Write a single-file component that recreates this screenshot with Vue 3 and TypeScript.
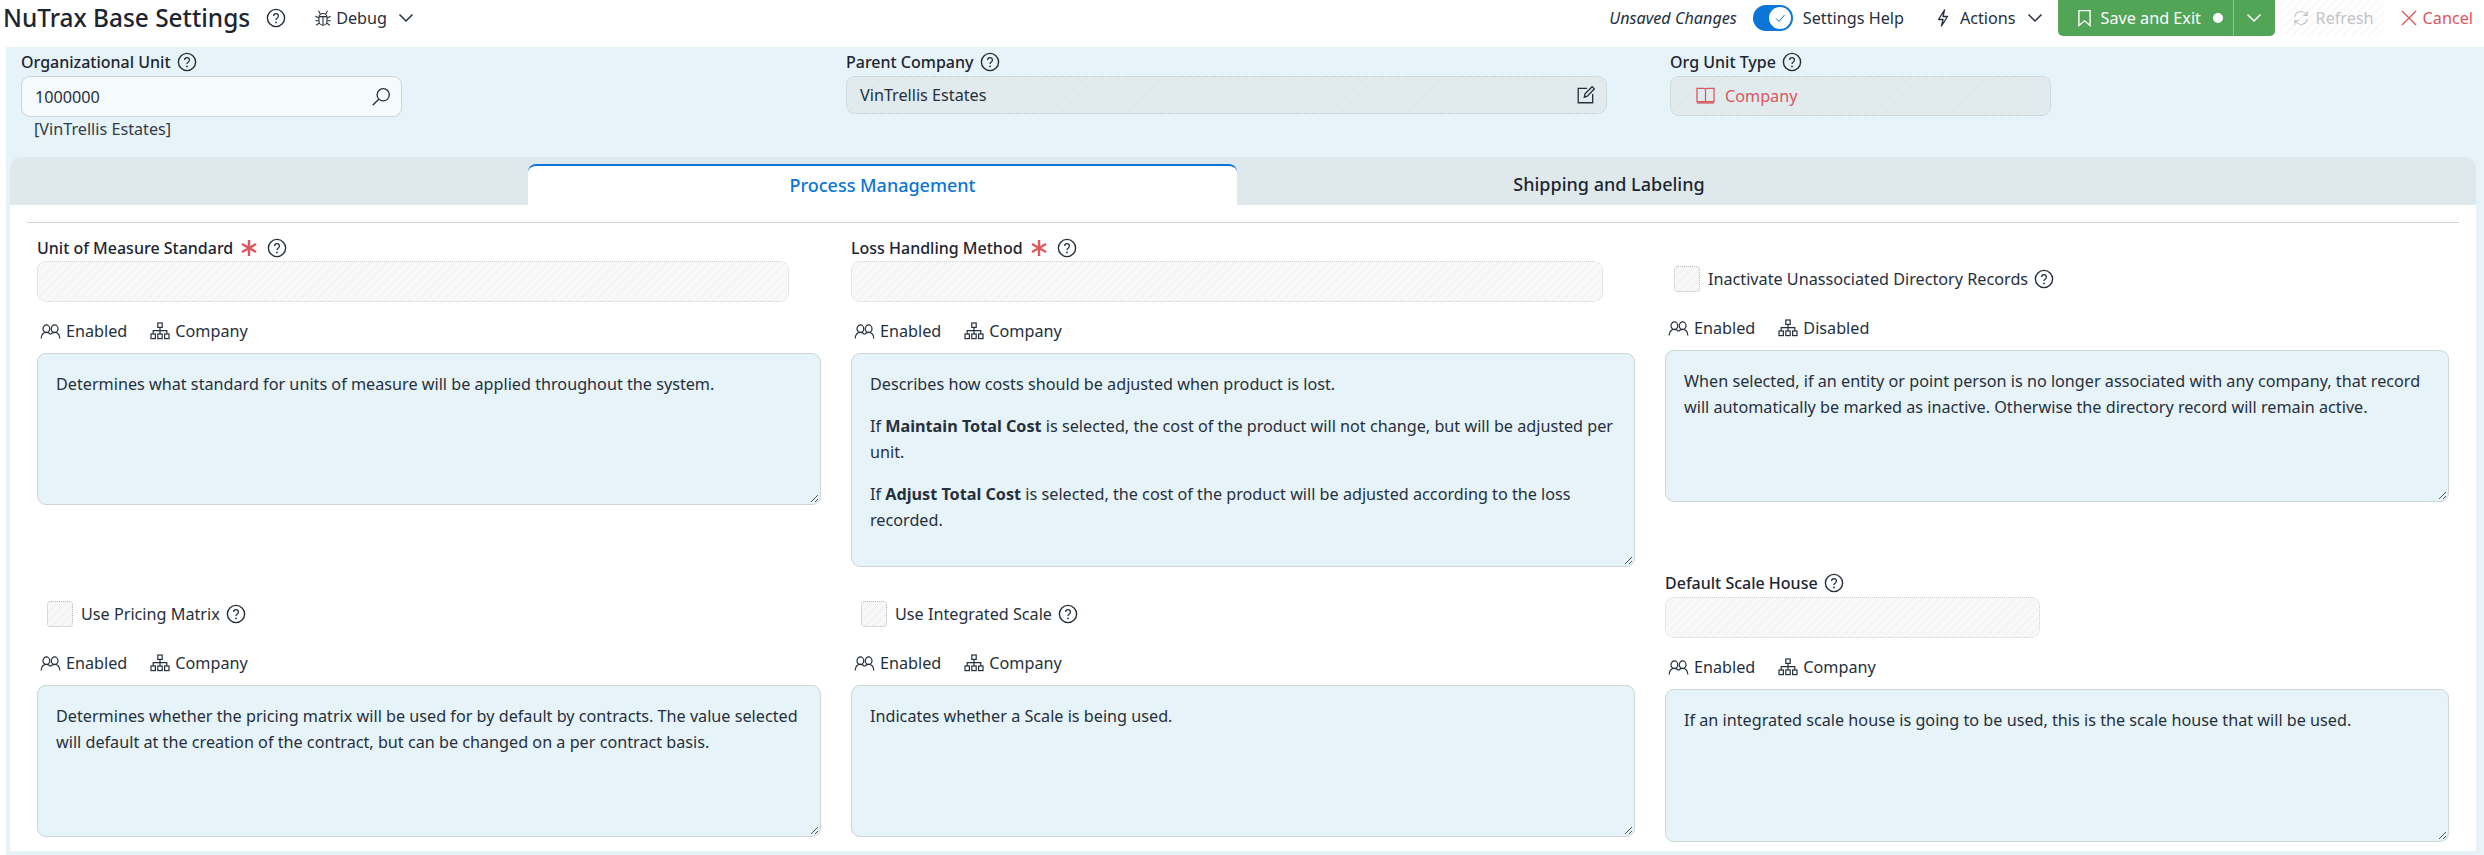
<script setup lang="ts">
const unitNote = 'Determines what standard for units of measure will be applied throughout the system.'
const inactiveNote = 'When selected, if an entity or point person is no longer associated with any company, that record will automatically be marked as inactive. Otherwise the directory record will remain active.'
const pricingNote = 'Determines whether the pricing matrix will be used for by default by contracts. The value selected will default at the creation of the contract, but can be changed on a per contract basis.'
const scaleNote = 'Indicates whether a Scale is being used.'
const houseNote = 'If an integrated scale house is going to be used, this is the scale house that will be used.'
</script>

<template>
  <div class="page">
    <svg class="sprite" aria-hidden="true">
      <symbol id="help" viewBox="0 0 20 20"><circle cx="10" cy="10" r="8.6" fill="none" stroke="currentColor" stroke-width="1.4"/><path d="M7.6 8a2.4 2.4 0 1 1 3.7 2c-.9.6-1.3 1-1.3 2" fill="none" stroke="currentColor" stroke-width="1.3"/><circle cx="10" cy="14.4" r=".9" fill="currentColor"/></symbol>
      <symbol id="users" viewBox="0 0 22 16"><g fill="none" stroke="currentColor" stroke-width="1.3"><ellipse cx="6.6" cy="5" rx="3.600" ry="4"/><ellipse cx="15.4" cy="5" rx="3.600" ry="4"/><path d="M1 15.500c.3-4 2.400-6.500 5.600-6.500 1.800 0 3.400.8 4.400 2.200M11 11.200C12 9.800 13.600 9 15.400 9c3.200 0 5.300 2.500 5.600 6.500"/></g></symbol>
      <symbol id="org" viewBox="0 0 20 18"><g fill="none" stroke="currentColor" stroke-width="1.2"><rect x="7.800" y="1" width="4.400" height="4.400"/><rect x="1" y="12" width="4.400" height="4.600"/><rect x="7.800" y="12" width="4.400" height="4.600"/><rect x="14.600" y="12" width="4.400" height="4.600"/><path d="M10 5.400V12M3.200 12V8.700H16.800V12"/></g></symbol>
      <symbol id="chev" viewBox="0 0 16 10"><path d="M1.500 1.500 8 8l6.500-6.500" fill="none" stroke="currentColor" stroke-width="1.500"/></symbol>
      <symbol id="grip" viewBox="0 0 10 10"><path d="M9 2 2 9M9 6 6 9" fill="none" stroke="#555" stroke-width="1"/></symbol>
      <symbol id="star" viewBox="0 0 16 16"><path d="M8 0v16M1 4l14 8M15 4 1 12" fill="none" stroke="currentColor" stroke-width="2.400"/></symbol>
    </svg>

    <header class="topbar">
      <div class="title-group">
        <h1 class="title">NuTrax Base Settings</h1>
        <svg class="help help-title"><use href="#help"/></svg>
        <div class="debug">
          <svg class="bug" viewBox="0 0 20 20"><g fill="none" stroke="currentColor" stroke-width="1.200"><path d="M5.500 9.500a4.500 4.500 0 0 1 9 0V13a4.500 5 0 0 1-9 0Z"/><path d="M10 8v10M5.500 8.500h9M7 5.500 5 2M13 5.500 15 2M5.500 10 1.500 8M14.500 10l4-2M5.500 13h-4M14.500 13h4M6 15.500l-3.500 2.500M14 15.500l3.500 2.500"/></g></svg>
          <span>Debug</span>
          <svg class="chev"><use href="#chev"/></svg>
        </div>
      </div>
      <div class="actions-group">
        <span class="unsaved">Unsaved Changes</span>
        <span class="toggle"><span class="knob"><svg viewBox="0 0 12 12"><path d="M2 6.500 5 9.500 10.500 3" fill="none" stroke="#0b75d8" stroke-width="1"/></svg></span></span>
        <span class="settings-help">Settings Help</span>
        <div class="actions">
          <svg class="bolt" viewBox="0 0 14 18"><path d="M8.500 1 2.500 10.500H7L5.500 17 11.500 7.500H7Z" fill="none" stroke="currentColor" stroke-width="1.300" stroke-linejoin="round"/></svg>
          <span>Actions</span>
          <svg class="chev"><use href="#chev"/></svg>
        </div>
        <div class="save">
          <div class="save-main">
            <svg class="bookmark" viewBox="0 0 14 18"><path d="M1 1h12v16l-6-5-6 5Z" fill="none" stroke="currentColor" stroke-width="1.500"/></svg>
            <span>Save and Exit</span>
            <i class="dot"></i>
          </div>
          <div class="save-more"><svg class="chev"><use href="#chev"/></svg></div>
        </div>
        <div class="refresh">
          <svg viewBox="0 0 18 18"><path d="M2 8a7 7 0 0 1 12.500-3.500L16 6M16 1.500V6h-4.500M16 10a7 7 0 0 1-12.500 3.500L2 12M2 16.500V12h4.500" fill="none" stroke="currentColor" stroke-width="1.300"/></svg>
          <span>Refresh</span>
        </div>
        <div class="cancel">
          <svg viewBox="0 0 16 16"><path d="M1 1l14 14M15 1 1 15" stroke="currentColor" stroke-width="1.400"/></svg>
          <span>Cancel</span>
        </div>
      </div>
    </header>

    <section class="panel">
      <div class="org-row">
        <div>
          <label class="label">Organizational Unit <svg class="help"><use href="#help"/></svg></label>
          <div class="input live w381">
            <span>1000000</span>
            <svg class="search" viewBox="0 0 18 18"><circle cx="11" cy="7" r="5.500" fill="none" stroke="currentColor" stroke-width="1.200"/><path d="M7 11 1.500 16.500" stroke="currentColor" stroke-width="1.200"/></svg>
          </div>
          <div class="org-name">[VinTrellis Estates]</div>
        </div>
        <div>
          <label class="label">Parent Company <svg class="help"><use href="#help"/></svg></label>
          <div class="input readonly w761">
            <span>VinTrellis Estates</span>
            <svg class="edit" viewBox="0 0 18 18"><path d="M10 3H2v13h13V8" fill="none" stroke="currentColor" stroke-width="1.200"/><path d="M7.500 11l.6-3L14.500 1.500l2 2L10.200 10Z" fill="none" stroke="currentColor" stroke-width="1.200"/></svg>
          </div>
        </div>
        <div>
          <label class="label">Org Unit Type <svg class="help"><use href="#help"/></svg></label>
          <div class="input readonly w381 company">
            <svg class="book" viewBox="0 0 20 18"><path d="M1 1h7.500c.8 0 1.500.7 1.500 1.500V15H1ZM19 1h-7.500c-.8 0-1.500.7-1.500 1.500V15h9Z" fill="none" stroke="currentColor" stroke-width="1.300"/><path d="M1 15.500h18v1.500H1Z" fill="currentColor"/></svg>
            <span>Company</span>
          </div>
        </div>
      </div>

      <div class="card">
        <nav class="tabs">
          <div class="tab active">Process Management</div>
          <div class="tab other">Shipping and Labeling</div>
        </nav>
        <div class="card-body">
          <div class="rule"></div>
          <div class="grid">
            <div class="cell">
              <label class="label">Unit of Measure Standard <svg class="req"><use href="#star"/></svg> <svg class="help"><use href="#help"/></svg></label>
              <div class="input disabled w752"></div>
              <div class="meta">
                <span><svg class="ic-users"><use href="#users"/></svg>Enabled</span>
                <span><svg class="ic-org"><use href="#org"/></svg>Company</span>
              </div>
              <div class="note h152"><p>{{ unitNote }}</p><svg class="grip"><use href="#grip"/></svg></div>
            </div>

            <div class="cell">
              <label class="label">Loss Handling Method <svg class="req"><use href="#star"/></svg> <svg class="help"><use href="#help"/></svg></label>
              <div class="input disabled w752"></div>
              <div class="meta">
                <span><svg class="ic-users"><use href="#users"/></svg>Enabled</span>
                <span><svg class="ic-org"><use href="#org"/></svg>Company</span>
              </div>
              <div class="note h214">
                <p>Describes how costs should be adjusted when product is lost.</p>
                <p>If <b>Maintain Total Cost</b> is selected, the cost of the product will not change, but will be adjusted per unit.</p>
                <p>If <b>Adjust Total Cost</b> is selected, the cost of the product will be adjusted according to the loss recorded.</p>
                <svg class="grip"><use href="#grip"/></svg>
              </div>
            </div>

            <div class="cell">
              <div class="check-row first-check">
                <i class="box"></i><span>Inactivate Unassociated Directory Records</span> <svg class="help"><use href="#help"/></svg>
              </div>
              <div class="meta after-check">
                <span><svg class="ic-users"><use href="#users"/></svg>Enabled</span>
                <span><svg class="ic-org"><use href="#org"/></svg>Disabled</span>
              </div>
              <div class="note h152"><p>{{ inactiveNote }}</p><svg class="grip"><use href="#grip"/></svg></div>
            </div>

            <div class="cell">
              <div class="check-row lower-check">
                <i class="box"></i><span>Use Pricing Matrix</span> <svg class="help"><use href="#help"/></svg>
              </div>
              <div class="meta after-check">
                <span><svg class="ic-users"><use href="#users"/></svg>Enabled</span>
                <span><svg class="ic-org"><use href="#org"/></svg>Company</span>
              </div>
              <div class="note h152"><p>{{ pricingNote }}</p><svg class="grip"><use href="#grip"/></svg></div>
            </div>

            <div class="cell">
              <div class="check-row lower-check">
                <i class="box"></i><span>Use Integrated Scale</span> <svg class="help"><use href="#help"/></svg>
              </div>
              <div class="meta after-check">
                <span><svg class="ic-users"><use href="#users"/></svg>Enabled</span>
                <span><svg class="ic-org"><use href="#org"/></svg>Company</span>
              </div>
              <div class="note h152"><p>{{ scaleNote }}</p><svg class="grip"><use href="#grip"/></svg></div>
            </div>

            <div class="cell">
              <label class="label">Default Scale House <svg class="help"><use href="#help"/></svg></label>
              <div class="input disabled w375 house"></div>
              <div class="meta">
                <span><svg class="ic-users"><use href="#users"/></svg>Enabled</span>
                <span><svg class="ic-org"><use href="#org"/></svg>Company</span>
              </div>
              <div class="note h153"><p>{{ houseNote }}</p><svg class="grip"><use href="#grip"/></svg></div>
            </div>
          </div>
        </div>
      </div>
    </section>
  </div>
</template>

<style>
html, body { margin: 0; background: #fff; }
</style>

<style scoped>
.page { width: 2484px; height: 855px; overflow: hidden; font-family: "Noto Sans", Roboto, sans-serif; font-size: 16.200px; color: #26303c; }
.sprite { position: absolute; width: 0; height: 0; }
.topbar { height: 47px; display: flex; justify-content: space-between; box-sizing: border-box; padding: 0 11px 11px 3px; }
.title-group, .actions-group { display: flex; align-items: center; height: 36px; }
.title { margin: 0; font-size: 24.400px; font-weight: 500; color: #1d2530; line-height: 34px; }
.help { width: 20px; height: 20px; color: #26303c; flex: none; vertical-align: -4px; }
.help-title { margin-left: 16px; }
.debug { display: flex; align-items: center; margin-left: 28px; gap: 4px; }
.bug { width: 18px; height: 18px; }
.chev { width: 16px; height: 10px; color: #26303c; }
.debug .chev { margin-left: 7px; }
.unsaved { font-style: italic; }
.toggle { width: 40px; height: 26px; margin-left: 16px; border-radius: 13px; background: #0b75d8; display: flex; align-items: center; justify-content: flex-end; padding-right: 2px; box-sizing: border-box; }
.knob { width: 22px; height: 22px; border-radius: 50%; background: #fff; display: flex; align-items: center; justify-content: center; }
.knob svg { width: 12px; height: 12px; }
.settings-help { margin-left: 10px; }
.actions { display: flex; align-items: center; margin-left: 32px; gap: 10px; }
.bolt { width: 14px; height: 18px; }
.actions .chev { margin-left: 1px; }
.save { display: flex; width: 217px; height: 36px; margin-left: 15px; background: #52a556; color: #fff; border-radius: 0 0 5px 5px; }
.save-main { width: 176px; display: flex; align-items: center; padding-left: 20px; box-sizing: border-box; border-right: 1px solid #8cc48e; }
.bookmark { width: 13px; height: 18px; margin-right: 10px; }
.dot { width: 10px; height: 10px; border-radius: 50%; background: #fff; margin-left: 12px; }
.save-more { flex: 1; display: flex; align-items: center; justify-content: center; }
.save-more .chev { color: #fff; }
.refresh { display: flex; align-items: center; gap: 7px; height: 36px; width: 104px; margin-left: 4px; padding-left: 14px; box-sizing: border-box; color: #c2c4c6; background: repeating-linear-gradient(135deg, #fff 0 3px, #fafafa 3px 6px); }
.refresh svg { width: 16px; height: 18px; }
.cancel { display: flex; align-items: center; gap: 6px; margin-left: 18px; color: #e0565e; }
.cancel svg { width: 16px; height: 16px; }

.panel { margin-left: 6px; height: 808px; box-sizing: border-box; background: #e6f3f8; padding-top: 3px; }
.org-row { display: grid; grid-template-columns: 795px 794px 1fr; column-gap: 30px; padding-left: 15px; height: 107px; }
.label { display: flex; align-items: center; gap: 6px; height: 24px; font-weight: 500; font-size: 16px; color: #1d2530; }
.input { height: 41px; margin-top: 2px; box-sizing: border-box; border-radius: 9px; display: flex; align-items: center; justify-content: space-between; padding: 0 10px 0 13px; }
.w381 { width: 381px; }
.w761 { width: 761px; height: 38px; }
.w752 { width: 752px; margin-top: 1px; }
.w375 { width: 375px; }
.live { background: #f5fbfc; border: 1px solid #ccd5d8; }
.readonly { border: 1px dotted #bcc8ca; background: repeating-linear-gradient(135deg, #e0eaec 0 3px, #e2ecee 3px 6px); }
.disabled { border: 1px dotted #cfd2d3; background: repeating-linear-gradient(135deg, #f6f6f6 0 3px, #f9f9f9 3px 6px); }
.search { width: 20px; height: 20px; }
.edit { width: 20px; height: 20px; }
.company { justify-content: flex-start; gap: 10px; color: #d9565f; padding-left: 25px; height: 40px; }
.book { width: 19px; height: 18px; }
.org-name { margin-left: 13px; line-height: 24px; color: #333c48; }

.card { margin-right: 8px; margin-left: 4px; height: 694px; background: #fff; border-radius: 10px 10px 0 0; }
.tabs { height: 48px; box-sizing: border-box; padding: 7px 0 0 518px; background: #dfe9eb; border-radius: 10px 10px 0 0; display: flex; }
.tab { height: 41px; display: flex; align-items: center; justify-content: center; font-weight: 500; font-size: 18px; box-sizing: border-box; padding-bottom: 2px; }
.tab.active { width: 709px; background: #fff; color: #0b75d8; border-top: 2px solid #0b75d8; border-radius: 8px 8px 0 0; }
.tab.other { width: 744px; color: #1d2530; }
.card-body { padding: 0 17px; }
.rule { height: 1px; margin-top: 17px; background: #d0d3d4; }
.grid { display: grid; grid-template-columns: 784px 784px 784px; grid-template-rows: 331px auto; gap: 4px 30px; margin-top: 13px; padding-left: 10px; }
.cell { display: flex; flex-direction: column; }
.req { color: #e0565e; width: 16px; height: 16px; flex: none; margin: 0 4px 0 2px; }
.meta { display: flex; gap: 23px; height: 24px; margin-top: 17px; padding-left: 3px; align-items: center; }
.meta span { display: flex; align-items: center; gap: 5px; }
.after-check { margin-top: 24px; }
.house { margin-top: 2px; }
.ic-users { width: 21px; height: 15px; }
.ic-org { width: 20px; height: 18px; }
.note { position: relative; margin-top: 10px; box-sizing: border-box; padding: 17px 18px; background: #e6f3f8; border: 1.500px solid #ccd5d8; border-radius: 9px; line-height: 26px; color: #26303c; }
.note p { margin: 0 0 16px; }
.h152 { height: 152px; }
.h153 { height: 153px; }
.h214 { height: 214px; }
.grip { position: absolute; right: 1px; bottom: 1px; width: 10px; height: 10px; }
.check-row { display: flex; align-items: center; height: 26px; }
.box { width: 26px; height: 26px; box-sizing: border-box; border: 1px dotted #b5babc; border-radius: 4px; background: repeating-linear-gradient(135deg, #f4f4f4 0 3px, #f9f9f9 3px 6px); margin-right: 8px; }
.check-row .help { margin-left: 6px; }
.first-check { margin-top: 30px; padding-left: 9px; }
.lower-check { margin-top: 30px; padding-left: 10px; }
</style>
